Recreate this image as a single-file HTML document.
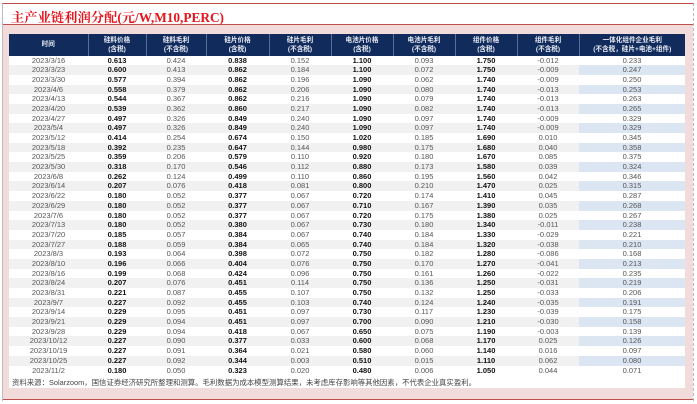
<!DOCTYPE html>
<html><head><meta charset="utf-8"><style>
*{margin:0;padding:0;box-sizing:border-box}
body{width:697px;height:404px;background:#fff;position:relative;overflow:hidden;font-family:"Liberation Sans","Noto Sans CJK SC",sans-serif}
.frame{position:absolute;left:2px;top:3px;width:692px;height:398px;border-top:1px solid #c0504d;border-left:1px solid #bbb;border-right:1px dashed #bbb}
.title{position:absolute;left:3px;top:4px;width:690px;height:21px;background:#fff;border-bottom:1px solid #c0504d}
.title span{position:absolute;left:8px;top:3px;font-family:"Liberation Serif","Noto Serif CJK SC",serif;font-weight:bold;font-size:13.3px;color:#e8141b;white-space:nowrap}
.pink{position:absolute;left:3px;top:25px;width:690px;height:375px;background:#f1dcdb;border-bottom:1px solid #c0504d}
.tb{position:absolute;left:9px;top:34px;width:676px;height:354px;background:#fff}
table{border-collapse:collapse;table-layout:fixed;width:676px;font-size:7.5px}
th{background:#112b5c;color:#e8ecf4;font-weight:bold;height:21.5px;line-height:9px;font-size:6.6px;border-right:1px solid #5a6f95;font-family:"Liberation Sans","Noto Sans CJK SC",sans-serif}
th:last-child{border-right:none}
td{height:9.68px;line-height:9.68px;text-align:center;color:#555;padding:0;white-space:nowrap}
td.b{font-weight:bold;color:#111}
tr:nth-child(even) td{background:#f1f1f1}
tr:nth-child(even) td:last-child{background:#dce6f2}
td:first-child{color:#555}
.note{position:absolute;left:12px;top:377px;font-size:7.4px;color:#444;white-space:nowrap}
</style></head><body>
<div class="frame"></div>
<div class="title"><span>主产业链利润分配(元/W,M10,PERC)</span></div>
<div class="pink"></div>
<div class="tb">
<table>
<colgroup><col style="width:79px"><col style="width:58px"><col style="width:60px"><col style="width:63px"><col style="width:62px"><col style="width:62px"><col style="width:62px"><col style="width:62px"><col style="width:62px"><col style="width:106px"></colgroup>
<thead><tr><th>时间</th><th>硅料价格<br>(含税)</th><th>硅料毛利<br>(不含税)</th><th>硅片价格<br>(含税)</th><th>硅片毛利<br>(不含税)</th><th>电池片价格<br>(含税)</th><th>电池片毛利<br>(不含税)</th><th>组件价格<br>(含税)</th><th>组件毛利<br>(不含税)</th><th>一体化组件企业毛利<br>(不含税，硅片+电池+组件)</th></tr></thead>
<tbody>
<tr><td>2023/3/16</td><td class="b">0.613</td><td>0.424</td><td class="b">0.838</td><td>0.152</td><td class="b">1.100</td><td>0.093</td><td class="b">1.750</td><td>-0.012</td><td>0.233</td></tr>
<tr><td>2023/3/23</td><td class="b">0.600</td><td>0.413</td><td class="b">0.862</td><td>0.184</td><td class="b">1.100</td><td>0.072</td><td class="b">1.750</td><td>-0.009</td><td>0.247</td></tr>
<tr><td>2023/3/30</td><td class="b">0.577</td><td>0.394</td><td class="b">0.862</td><td>0.196</td><td class="b">1.090</td><td>0.062</td><td class="b">1.740</td><td>-0.009</td><td>0.250</td></tr>
<tr><td>2023/4/6</td><td class="b">0.558</td><td>0.379</td><td class="b">0.862</td><td>0.206</td><td class="b">1.090</td><td>0.080</td><td class="b">1.740</td><td>-0.013</td><td>0.253</td></tr>
<tr><td>2023/4/13</td><td class="b">0.544</td><td>0.367</td><td class="b">0.862</td><td>0.216</td><td class="b">1.090</td><td>0.079</td><td class="b">1.740</td><td>-0.013</td><td>0.263</td></tr>
<tr><td>2023/4/20</td><td class="b">0.539</td><td>0.362</td><td class="b">0.860</td><td>0.217</td><td class="b">1.090</td><td>0.082</td><td class="b">1.740</td><td>-0.013</td><td>0.265</td></tr>
<tr><td>2023/4/27</td><td class="b">0.497</td><td>0.326</td><td class="b">0.849</td><td>0.240</td><td class="b">1.090</td><td>0.097</td><td class="b">1.740</td><td>-0.009</td><td>0.329</td></tr>
<tr><td>2023/5/4</td><td class="b">0.497</td><td>0.326</td><td class="b">0.849</td><td>0.240</td><td class="b">1.090</td><td>0.097</td><td class="b">1.740</td><td>-0.009</td><td>0.329</td></tr>
<tr><td>2023/5/12</td><td class="b">0.414</td><td>0.254</td><td class="b">0.674</td><td>0.150</td><td class="b">1.020</td><td>0.185</td><td class="b">1.690</td><td>0.010</td><td>0.345</td></tr>
<tr><td>2023/5/18</td><td class="b">0.392</td><td>0.235</td><td class="b">0.647</td><td>0.144</td><td class="b">0.980</td><td>0.175</td><td class="b">1.680</td><td>0.040</td><td>0.358</td></tr>
<tr><td>2023/5/25</td><td class="b">0.359</td><td>0.206</td><td class="b">0.579</td><td>0.110</td><td class="b">0.920</td><td>0.180</td><td class="b">1.670</td><td>0.085</td><td>0.375</td></tr>
<tr><td>2023/5/30</td><td class="b">0.318</td><td>0.170</td><td class="b">0.546</td><td>0.112</td><td class="b">0.880</td><td>0.173</td><td class="b">1.580</td><td>0.039</td><td>0.324</td></tr>
<tr><td>2023/6/8</td><td class="b">0.262</td><td>0.124</td><td class="b">0.499</td><td>0.110</td><td class="b">0.860</td><td>0.195</td><td class="b">1.560</td><td>0.042</td><td>0.346</td></tr>
<tr><td>2023/6/14</td><td class="b">0.207</td><td>0.076</td><td class="b">0.418</td><td>0.081</td><td class="b">0.800</td><td>0.210</td><td class="b">1.470</td><td>0.025</td><td>0.315</td></tr>
<tr><td>2023/6/22</td><td class="b">0.180</td><td>0.052</td><td class="b">0.377</td><td>0.067</td><td class="b">0.720</td><td>0.174</td><td class="b">1.410</td><td>0.045</td><td>0.287</td></tr>
<tr><td>2023/6/29</td><td class="b">0.180</td><td>0.052</td><td class="b">0.377</td><td>0.067</td><td class="b">0.710</td><td>0.167</td><td class="b">1.390</td><td>0.035</td><td>0.268</td></tr>
<tr><td>2023/7/6</td><td class="b">0.180</td><td>0.052</td><td class="b">0.377</td><td>0.067</td><td class="b">0.720</td><td>0.175</td><td class="b">1.380</td><td>0.025</td><td>0.267</td></tr>
<tr><td>2023/7/13</td><td class="b">0.180</td><td>0.052</td><td class="b">0.380</td><td>0.067</td><td class="b">0.730</td><td>0.180</td><td class="b">1.340</td><td>-0.011</td><td>0.238</td></tr>
<tr><td>2023/7/20</td><td class="b">0.185</td><td>0.057</td><td class="b">0.384</td><td>0.067</td><td class="b">0.740</td><td>0.184</td><td class="b">1.330</td><td>-0.029</td><td>0.221</td></tr>
<tr><td>2023/7/27</td><td class="b">0.188</td><td>0.059</td><td class="b">0.384</td><td>0.065</td><td class="b">0.740</td><td>0.184</td><td class="b">1.320</td><td>-0.038</td><td>0.210</td></tr>
<tr><td>2023/8/3</td><td class="b">0.193</td><td>0.064</td><td class="b">0.398</td><td>0.072</td><td class="b">0.750</td><td>0.182</td><td class="b">1.280</td><td>-0.086</td><td>0.168</td></tr>
<tr><td>2023/8/10</td><td class="b">0.196</td><td>0.066</td><td class="b">0.404</td><td>0.076</td><td class="b">0.750</td><td>0.170</td><td class="b">1.270</td><td>-0.041</td><td>0.213</td></tr>
<tr><td>2023/8/16</td><td class="b">0.199</td><td>0.068</td><td class="b">0.424</td><td>0.096</td><td class="b">0.750</td><td>0.161</td><td class="b">1.260</td><td>-0.022</td><td>0.235</td></tr>
<tr><td>2023/8/24</td><td class="b">0.207</td><td>0.076</td><td class="b">0.451</td><td>0.114</td><td class="b">0.750</td><td>0.136</td><td class="b">1.250</td><td>-0.031</td><td>0.219</td></tr>
<tr><td>2023/8/31</td><td class="b">0.221</td><td>0.087</td><td class="b">0.455</td><td>0.107</td><td class="b">0.750</td><td>0.132</td><td class="b">1.250</td><td>-0.033</td><td>0.206</td></tr>
<tr><td>2023/9/7</td><td class="b">0.227</td><td>0.092</td><td class="b">0.455</td><td>0.103</td><td class="b">0.740</td><td>0.124</td><td class="b">1.240</td><td>-0.035</td><td>0.191</td></tr>
<tr><td>2023/9/14</td><td class="b">0.229</td><td>0.095</td><td class="b">0.451</td><td>0.097</td><td class="b">0.730</td><td>0.117</td><td class="b">1.230</td><td>-0.039</td><td>0.175</td></tr>
<tr><td>2023/9/21</td><td class="b">0.229</td><td>0.094</td><td class="b">0.451</td><td>0.097</td><td class="b">0.700</td><td>0.090</td><td class="b">1.210</td><td>-0.030</td><td>0.158</td></tr>
<tr><td>2023/9/28</td><td class="b">0.229</td><td>0.094</td><td class="b">0.418</td><td>0.067</td><td class="b">0.650</td><td>0.075</td><td class="b">1.190</td><td>-0.003</td><td>0.139</td></tr>
<tr><td>2023/10/12</td><td class="b">0.227</td><td>0.090</td><td class="b">0.377</td><td>0.033</td><td class="b">0.600</td><td>0.068</td><td class="b">1.170</td><td>0.025</td><td>0.126</td></tr>
<tr><td>2023/10/19</td><td class="b">0.227</td><td>0.091</td><td class="b">0.364</td><td>0.021</td><td class="b">0.580</td><td>0.060</td><td class="b">1.140</td><td>0.016</td><td>0.097</td></tr>
<tr><td>2023/10/25</td><td class="b">0.227</td><td>0.092</td><td class="b">0.344</td><td>0.003</td><td class="b">0.510</td><td>0.015</td><td class="b">1.110</td><td>0.062</td><td>0.080</td></tr>
<tr><td>2023/11/2</td><td class="b">0.180</td><td>0.050</td><td class="b">0.323</td><td>0.020</td><td class="b">0.480</td><td>0.006</td><td class="b">1.050</td><td>0.044</td><td>0.071</td></tr>
</tbody></table>
</div>
<div class="note">资料来源：Solarzoom，国信证券经济研究所整理和测算。毛利数据为成本模型测算结果，未考虑库存影响等其他因素，不代表企业真实盈利。</div>
</body></html>
